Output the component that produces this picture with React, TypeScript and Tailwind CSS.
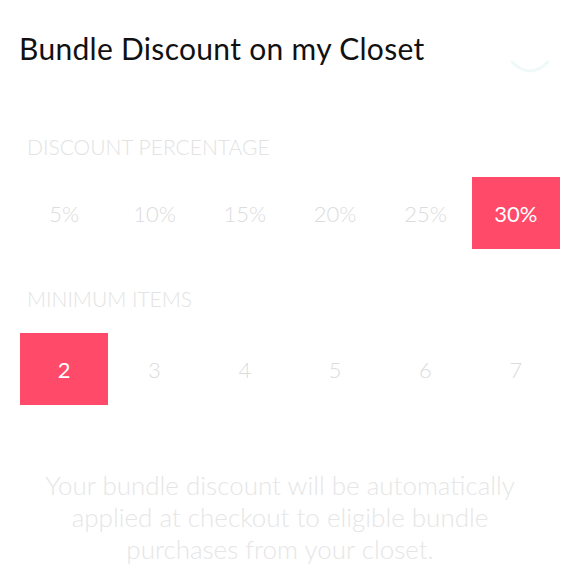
import { useState } from "react"

const percents = ["5%", "10%", "15%", "20%", "25%", "30%"]
const items = ["2", "3", "4", "5", "6", "7"]

function OptionRow({ options, selected, onPick }: { options: string[]; selected: string; onPick: (v: string) => void }) {
  return (
    <div className="grid grid-cols-6 gap-[2px]">
      {options.map((opt) => (
        <button
          key={opt}
          onClick={() => onPick(opt)}
          className={
            opt === selected
              ? "h-[72px] flex items-center justify-center bg-[#ff4a6a] text-white text-[22px] font-normal"
              : "h-[72px] flex items-center justify-center text-[#dcdcdc] text-[22px] font-light"
          }
        >
          {opt}
        </button>
      ))}
    </div>
  )
}

export default function App() {
  const [percent, setPercent] = useState("30%")
  const [minItems, setMinItems] = useState("2")

  return (
    <div className="w-[580px] h-[580px] overflow-hidden bg-white font-['Lato',sans-serif]">
      <div className="flex items-start justify-between pl-[19px] pr-[28px] pt-[30px]">
        <h1 className="text-[30px] leading-[36px] tracking-[0.3px] text-[#111111]">Bundle Discount on my Closet</h1>
        <svg width="44" height="30" viewBox="0 0 44 30" className="mt-[26px]">
          <path d="M4 6 Q22 24 40 6" fill="none" stroke="#eef9f8" strokeWidth="3" strokeLinecap="round" />
        </svg>
      </div>

      <div className="px-[20px] mt-[49px]">
        <p className="pl-[7px] text-[21px] leading-[24px] font-light text-[#e3e3e3] uppercase">Discount Percentage</p>
        <div className="mt-[18px]">
          <OptionRow options={percents} selected={percent} onPick={setPercent} />
        </div>

        <p className="pl-[7px] mt-[38px] text-[21px] leading-[24px] font-light text-[#e3e3e3] uppercase">Minimum Items</p>
        <div className="mt-[22px]">
          <OptionRow options={items} selected={minItems} onPick={setMinItems} />
        </div>
      </div>

      <p className="mt-[64px] ml-[30px] w-[500px] text-center text-[26px] leading-[32px] font-light text-[#e6e6e6]">
        Your bundle discount will be automatically applied at checkout to eligible bundle purchases from your closet.
      </p>
    </div>
  )
}
